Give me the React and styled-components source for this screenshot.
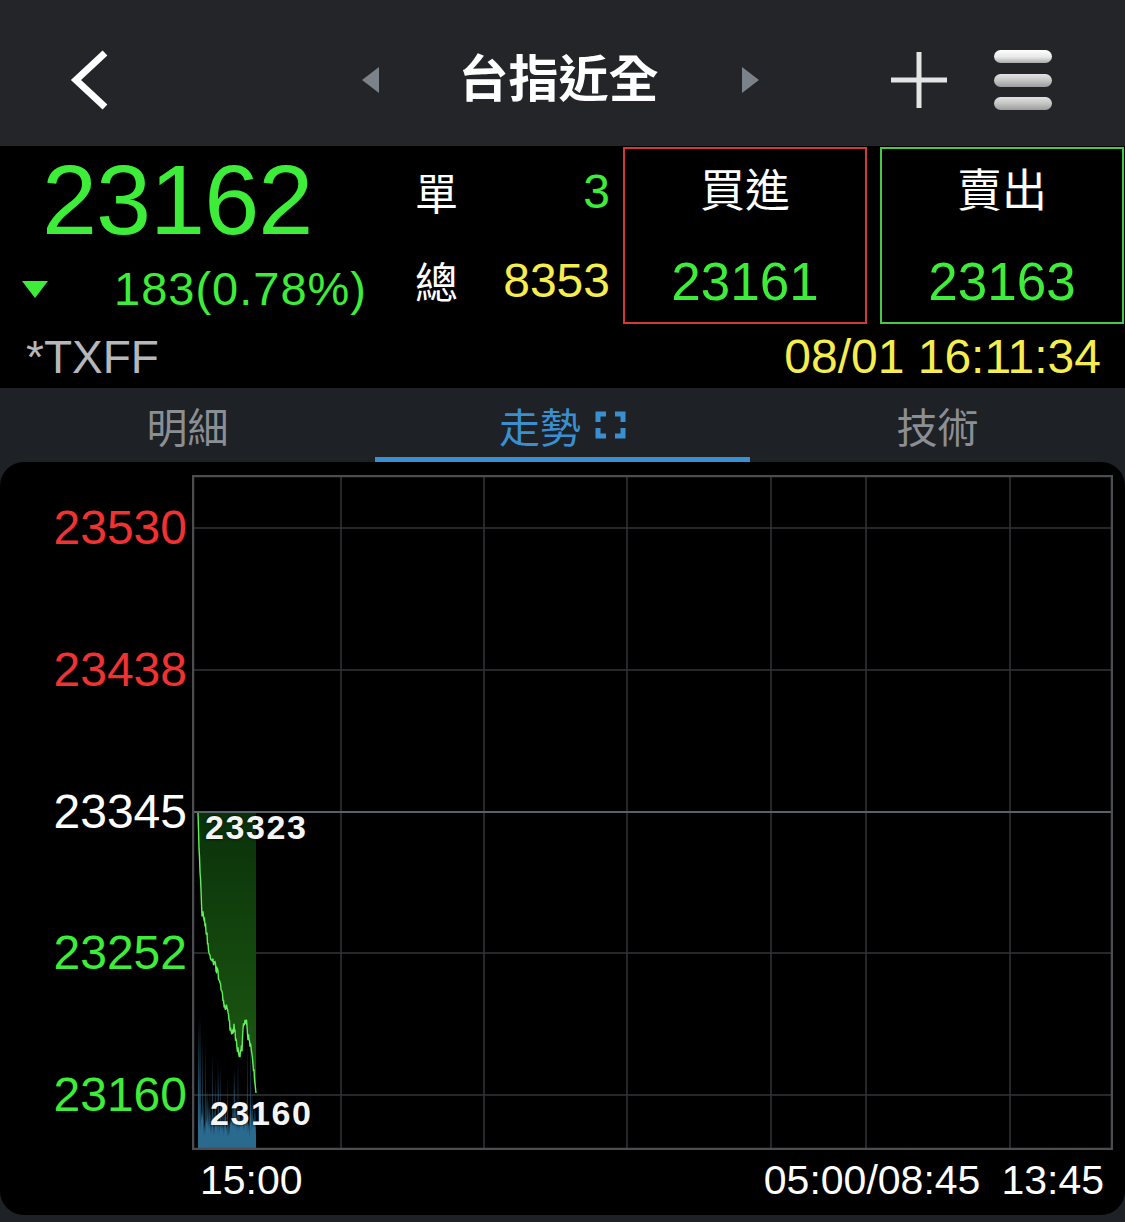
import React from "react";
import styled, { createGlobalStyle } from "styled-components";

const FONT = `"Liberation Sans", "Noto Sans CJK TC", sans-serif`;
const GREEN = "#3ded3a";
const RED = "#f03232";
const YELLOW = "#f5ee4e";
const BLUE = "#3a8fd0";

const Global = createGlobalStyle`
  html, body { margin: 0; padding: 0; background: #1e2125; }
  body { font-family: ${FONT}; -webkit-font-smoothing: antialiased; }
  * { box-sizing: border-box; }
`;

const Page = styled.div`
  width: 1125px;
  min-height: 1222px;
  background: #1e2125;
  display: flex;
  flex-direction: column;
`;

/* ---------- header ---------- */
const Header = styled.header`
  height: 146px;
  background: #232528;
  display: grid;
  grid-template-columns: 1fr auto 1fr;
  align-items: center;
  padding: 14px 73px 0 68px;
`;
const BackButton = styled.button`
  justify-self: start;
  background: none;
  border: 0;
  padding: 0;
  width: 44px;
  height: 60px;
  display: flex;
  align-items: center;
`;
const TitleGroup = styled.div`
  display: flex;
  align-items: center;
`;
const NavTriangle = styled.span`
  width: 0;
  height: 0;
  border-top: 13px solid transparent;
  border-bottom: 13px solid transparent;
  ${(p) =>
    p.$dir === "left"
      ? `border-right: 17px solid #7c8289; margin-right: 80px;`
      : `border-left: 17px solid #7c8289; margin-left: 83px;`}
`;
const Title = styled.h1`
  margin: 0;
  font-size: 50px;
  line-height: 60px;
  font-weight: 700;
  color: #ffffff;
  letter-spacing: 0;
`;
const HeaderActions = styled.div`
  justify-self: end;
  display: flex;
  align-items: center;
  gap: 46px;
`;
const IconButton = styled.button`
  background: none;
  border: 0;
  padding: 0;
  width: 58px;
  height: 60px;
  display: flex;
  align-items: center;
  justify-content: center;
`;
const Burger = styled.div`
  width: 58px;
  height: 60px;
  display: flex;
  flex-direction: column;
  justify-content: space-between;
  padding: 0;
`;
const BurgerBar = styled.span`
  display: block;
  height: 13px;
  border-radius: 7px;
  background: ${(p) =>
    p.$light
      ? "linear-gradient(#ffffff 0%, #e8e8e8 55%, #a9a9a9 100%)"
      : "linear-gradient(#e2e2e2 0%, #c4c4c4 50%, #9c9c9c 100%)"};
`;

/* ---------- quote ---------- */
const Quote = styled.section`
  background: #000;
  display: flex;
  flex-direction: column;
`;
const QuoteMain = styled.div`
  height: 179px;
  display: flex;
  align-items: flex-start;
`;
const PriceBlock = styled.div`
  width: 405px;
  display: flex;
  flex-direction: column;
`;
const Price = styled.div`
  margin-top: 6px;
  padding-left: 42px;
  font-size: 99px;
  line-height: 96px;
  color: ${GREEN};
  letter-spacing: -1px;
`;
const ChangeRow = styled.div`
  margin-top: 18px;
  display: flex;
  align-items: center;
  padding-left: 22px;
`;
const DownTriangle = styled.span`
  width: 0;
  height: 0;
  border-left: 13px solid transparent;
  border-right: 13px solid transparent;
  border-top: 17px solid ${GREEN};
  margin-right: 66px;
`;
const ChangeText = styled.span`
  font-size: 47px;
  line-height: 46px;
  color: ${GREEN};
  letter-spacing: 1px;
`;
const Stats = styled.div`
  width: 210px;
  padding: 0 5px 0 10px;
  display: flex;
  flex-direction: column;
  gap: 29px;
  margin-top: 15px;
`;
const StatRow = styled.div`
  height: 60px;
  display: flex;
  align-items: center;
  justify-content: space-between;
`;
const StatLabel = styled.span`
  font-size: 43px;
  color: #fff;
`;
const StatValue = styled.span`
  font-size: 48px;
  color: ${(p) => p.$color};
`;
const OrderBox = styled.div`
  margin-left: ${(p) => p.$gap}px;
  margin-top: 1px;
  width: 244px;
  height: 177px;
  border: 2px solid ${(p) => p.$border};
  display: flex;
  flex-direction: column;
  align-items: center;
  padding-top: 18px;
`;
const OrderLabel = styled.div`
  font-size: 45px;
  line-height: 50px;
  color: #fff;
`;
const OrderPrice = styled.div`
  margin-top: 35px;
  font-size: 53px;
  line-height: 60px;
  color: ${GREEN};
`;
const QuoteFoot = styled.div`
  height: 63px;
  display: flex;
  align-items: center;
  justify-content: space-between;
  padding: 0 24px 0 26px;
`;
const Symbol = styled.span`
  font-size: 46px;
  color: #b5b7ba;
`;
const Stamp = styled.span`
  font-size: 48px;
  color: ${YELLOW};
  letter-spacing: 0;
`;

/* ---------- tabs ---------- */
const Tabs = styled.nav`
  height: 74px;
  background: #1e2125;
  display: grid;
  grid-template-columns: repeat(3, 1fr);
`;
const Tab = styled.div`
  position: relative;
  display: flex;
  align-items: center;
  justify-content: center;
  gap: 14px;
  font-size: 41px;
  color: ${(p) => (p.$active ? BLUE : "#8b8e93")};
  &::after {
    content: "";
    position: absolute;
    left: 0;
    right: 0;
    bottom: 0;
    height: 5px;
    background: ${(p) => (p.$active ? BLUE : "transparent")};
  }
`;

/* ---------- chart ---------- */
const ChartPanel = styled.section`
  height: 753px;
  background: #000;
  border-radius: 24px;
  padding-top: 13px;
  display: flex;
  flex-direction: column;
`;
const ChartBody = styled.div`
  display: flex;
  height: 675px;
`;
const YAxis = styled.div`
  width: 192px;
  padding: 28px 5px 30px 0;
  display: flex;
  flex-direction: column;
  justify-content: space-between;
  align-items: flex-end;
`;
const YLabel = styled.span`
  font-size: 48px;
  line-height: 50px;
  color: ${(p) => p.$color};
`;
const Plot = styled.div`
  position: relative;
  width: 921px;
  height: 675px;
`;
const PlotSvg = styled.svg`
  display: block;
`;
const MarkLabel = styled.span`
  position: absolute;
  font-size: 34px;
  line-height: 36px;
  font-weight: 700;
  letter-spacing: 1.6px;
  color: #f4f4f4;
  text-shadow: 0 0 3px #000;
`;
const XAxis = styled.div`
  margin-left: 192px;
  width: 921px;
  height: 60px;
  padding: 0 9px 0 8px;
  display: flex;
  align-items: center;
  justify-content: space-between;
`;
const XGroup = styled.div`
  display: flex;
  gap: 21px;
`;
const XLabel = styled.span`
  font-size: 41px;
  color: #fff;
`;

/* ---------- data ---------- */
function rng(seed) {
  let s = seed;
  return () => {
    s = (s * 1103515245 + 12345) & 0x7fffffff;
    return s / 0x7fffffff;
  };
}

const OX = 192;
const OY = 475;
const REF_Y = 812 - OY;
const KEY = [
  [198, 812], [199, 847], [202, 913], [204, 917], [207, 937], [210, 957],
  [213, 962], [217, 970], [221, 990], [223, 1000], [227, 1010], [230, 1027],
  [233, 1037], [234, 1027], [237, 1047], [240, 1053], [242, 1047], [243, 1027],
  [245, 1020], [247, 1023], [248, 1037], [251, 1047], [253, 1063], [255, 1083], [256, 1093],
];

function buildLine() {
  const r = rng(11);
  const pts = [];
  for (let i = 0; i < KEY.length - 1; i++) {
    const [x0, y0] = KEY[i];
    const [x1, y1] = KEY[i + 1];
    const n = Math.max(1, Math.round((x1 - x0) * 2));
    for (let k = 0; k < n; k++) {
      const t = k / n;
      const x = x0 + (x1 - x0) * t;
      let y = y0 + (y1 - y0) * t + (i > 0 ? (r() - 0.5) * 9 : 0);
      y = Math.max(y, 813);
      pts.push([x - OX, y - OY]);
    }
  }
  pts.push([256 - OX, 1093 - OY]);
  return pts;
}

function buildVolume() {
  const r = rng(5);
  const pts = [[6, 675]];
  for (let x = 198; x <= 256; x += 0.8) {
    let top = 1098 + r() * 28;
    const sp = r();
    if (sp > 0.86) top = 1010 + r() * 60;
    else if (sp > 0.7) top = 1060 + r() * 35;
    if (x < 201) top = 1012 + r() * 10;
    pts.push([x - OX, top - OY]);
    pts.push([x + 0.4 - OX, 1118 + r() * 20 - OY]);
  }
  pts.push([64, 675]);
  return pts;
}

const LINE = buildLine();
const VOL = buildVolume();
const toPath = (pts) => pts.map((p, i) => `${i ? "L" : "M"}${p[0].toFixed(1)} ${p[1].toFixed(1)}`).join(" ");

const H_LINES = [53, 195, 478, 620];
const V_LINES = [149, 292, 435, 579, 674, 818];

function Chart() {
  const linePath = toPath(LINE);
  const areaPath = `M6 ${REF_Y} ` + LINE.map((p) => `L${p[0].toFixed(1)} ${p[1].toFixed(1)}`).join(" ") + ` L64 ${REF_Y} Z`;
  return (
    <PlotSvg width="921" height="675" viewBox="0 0 921 675">
      <defs>
        <linearGradient id="gfill" x1="0" y1="0" x2="0" y2="1">
          <stop offset="0" stopColor="#0a310a" />
          <stop offset="1" stopColor="#1e5c12" />
        </linearGradient>
      </defs>
      {H_LINES.map((y) => (
        <line key={"h" + y} x1="0" x2="921" y1={y} y2={y} stroke="#333538" strokeWidth="1.5" />
      ))}
      {V_LINES.map((x) => (
        <line key={"v" + x} x1={x} x2={x} y1="0" y2="675" stroke="#333538" strokeWidth="1.5" />
      ))}
      <path d={areaPath} fill="url(#gfill)" />
      <path d={toPath(VOL)} fill="#2b6a8f" />
      <line x1="0" x2="921" y1={REF_Y} y2={REF_Y} stroke="#5b6169" strokeWidth="2" />
      <path d={linePath} fill="none" stroke="#62f05c" strokeWidth="1.4" />
      <rect x="1" y="1" width="919" height="673" fill="none" stroke="#4b4d50" strokeWidth="2.5" />
    </PlotSvg>
  );
}

function TrendIcon() {
  return (
    <svg width="31" height="28" viewBox="0 0 31 28">
      <path
        d="M3 11 V3 H11 M20 3 H28 V11 M28 17 V25 H20 M11 25 H3 V17"
        fill="none"
        stroke={BLUE}
        strokeWidth="5"
      />
    </svg>
  );
}

export default function App() {
  return (
    <Page>
      <Global />
      <Header>
        <BackButton aria-label="back">
          <svg width="44" height="60" viewBox="0 0 44 60">
            <path d="M37 3 L8 30 L37 57" fill="none" stroke="#fff" strokeWidth="7" />
          </svg>
        </BackButton>
        <TitleGroup>
          <NavTriangle $dir="left" />
          <Title>台指近全</Title>
          <NavTriangle $dir="right" />
        </TitleGroup>
        <HeaderActions>
          <IconButton aria-label="add">
            <svg width="58" height="58" viewBox="0 0 58 58">
              <path d="M29 1 V57 M1 29 H57" stroke="#e4e4e4" strokeWidth="5" />
            </svg>
          </IconButton>
          <Burger>
            <BurgerBar $light />
            <BurgerBar />
            <BurgerBar />
          </Burger>
        </HeaderActions>
      </Header>

      <Quote>
        <QuoteMain>
          <PriceBlock>
            <Price>23162</Price>
            <ChangeRow>
              <DownTriangle />
              <ChangeText>183(0.78%)</ChangeText>
            </ChangeRow>
          </PriceBlock>
          <Stats>
            <StatRow>
              <StatLabel>單</StatLabel>
              <StatValue $color={GREEN}>3</StatValue>
            </StatRow>
            <StatRow>
              <StatLabel>總</StatLabel>
              <StatValue $color={YELLOW}>8353</StatValue>
            </StatRow>
          </Stats>
          <OrderBox $border="#d23a3a" $gap={8}>
            <OrderLabel>買進</OrderLabel>
            <OrderPrice>23161</OrderPrice>
          </OrderBox>
          <OrderBox $border="#46c946" $gap={13}>
            <OrderLabel>賣出</OrderLabel>
            <OrderPrice>23163</OrderPrice>
          </OrderBox>
        </QuoteMain>
        <QuoteFoot>
          <Symbol>*TXFF</Symbol>
          <Stamp>08/01 16:11:34</Stamp>
        </QuoteFoot>
      </Quote>

      <Tabs>
        <Tab>明細</Tab>
        <Tab $active>
          走勢
          <TrendIcon />
        </Tab>
        <Tab>技術</Tab>
      </Tabs>

      <ChartPanel>
        <ChartBody>
          <YAxis>
            <YLabel $color={RED}>23530</YLabel>
            <YLabel $color={RED}>23438</YLabel>
            <YLabel $color="#ffffff">23345</YLabel>
            <YLabel $color={GREEN}>23252</YLabel>
            <YLabel $color={GREEN}>23160</YLabel>
          </YAxis>
          <Plot>
            <Chart />
            <MarkLabel style={{ left: 13, top: 334 }}>23323</MarkLabel>
            <MarkLabel style={{ left: 18, top: 620 }}>23160</MarkLabel>
          </Plot>
        </ChartBody>
        <XAxis>
          <XLabel>15:00</XLabel>
          <XGroup>
            <XLabel>05:00/08:45</XLabel>
            <XLabel>13:45</XLabel>
          </XGroup>
        </XAxis>
      </ChartPanel>
    </Page>
  );
}
